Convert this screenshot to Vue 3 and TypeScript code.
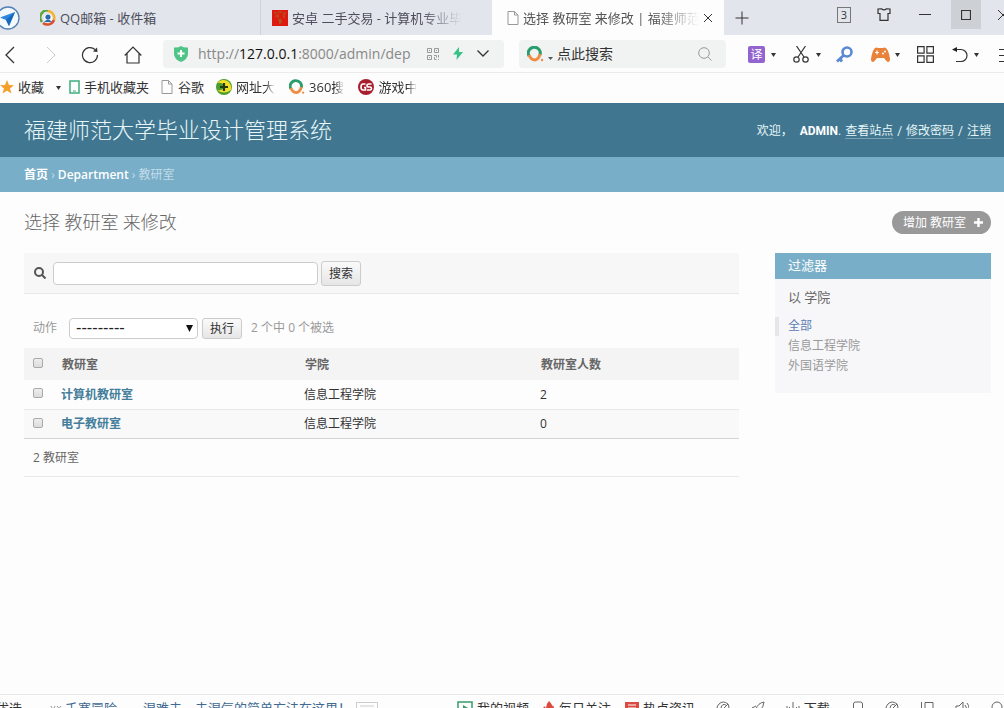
<script setup lang="ts">
import { ref, computed } from 'vue'

interface Department {
  id: number
  name: string
  college: string
  members: number
}

const departments: Department[] = [
  { id: 1, name: '计算机教研室', college: '信息工程学院', members: 2 },
  { id: 2, name: '电子教研室', college: '信息工程学院', members: 0 },
]
const filters: string[] = ['全部', '信息工程学院', '外国语学院']
const activeFilter = ref('全部')
const query = ref('')
const siteQuery = ref('')
const action = ref('')
const selected = ref<number[]>([])
const allSelected = computed<boolean>({
  get: () => selected.value.length === departments.length,
  set: (on) => {
    selected.value = on ? departments.map((d) => d.id) : []
  },
})
</script>

<template>
  <div class="browser">
    <div class="tabstrip">
      <button class="brand" aria-label="浏览器">
        <svg width="20" height="26" viewBox="0 0 20 26"><circle cx="8" cy="13" r="11" fill="#f4f9fd" stroke="#5580b4" stroke-width="1.3" /><path d="M15 7 0 12.5l6 2.500 3 6z" fill="#2b86dc" /><path d="M15 7 6 15l3 6z" fill="#1669bd" /></svg>
      </button>
      <div class="tab first">
        <svg width="16" height="16" viewBox="0 0 16 16"><path d="M2 12A7 7 0 0 1 10 1" fill="none" stroke="#5da63a" stroke-width="2.500" /><path d="M8 1a7 7 0 0 1 6 9" fill="none" stroke="#f3b32a" stroke-width="2.500" /><path d="M14 10a7 7 0 0 1-11 3" fill="none" stroke="#d9502d" stroke-width="2.500" /><circle cx="8" cy="8" r="4" fill="#fff" /><circle cx="8" cy="7" r="2.600" fill="#2a6bb0" /><path d="M4 12q4-5 8 0z" fill="#2a6bb0" /></svg>
        <button class="tab-name">QQ邮箱 - 收件箱</button>
      </div>
      <div class="tab second">
        <svg width="16" height="16" viewBox="0 0 16 16"><path fill="#df1a10" d="M0 0h16v16H0z" /><path d="M2 3h3M6 2h4M11 3h3M3 6h2m1-2v4M12 4v4M6 10h4M7 12h3M8 9v5" stroke="#9d6a1c" stroke-width="1.200" /></svg>
        <button class="tab-name fade">安卓 二手交易 - 计算机专业毕</button>
      </div>
      <div class="tab active">
        <svg width="12" height="14" viewBox="0 0 12 14" class="line grey"><path d="M1 .5h6.500L11 4v9.500H1zM7.500.5V4H11" /></svg>
        <button class="tab-name fade">选择 教研室 来修改 | 福建师范</button>
        <button class="icon-btn" aria-label="关闭标签页"><svg width="10" height="10" viewBox="0 0 10 10" class="line"><path d="m1 1 8 8M9 1 1 9" /></svg></button>
      </div>
      <button class="icon-btn new-tab" aria-label="新标签页"><svg width="14" height="14" viewBox="0 0 14 14" class="line"><path d="M7 .5v13M.5 7h13" /></svg></button>
      <div class="window-tools">
        <button class="badge">3</button>
        <button class="icon-btn" aria-label="皮肤"><svg width="14" height="13" viewBox="0 0 14 13" class="line"><path d="M4.500.8 1 1v4.500h2v6.800h8V5.500h2V1L9.500.8Q7 3 4.500.8z" stroke-width="1.200" /></svg></button>
        <button class="icon-btn" aria-label="最小化"><svg width="12" height="12" viewBox="0 0 12 12" class="line"><path d="M0 5.500h12" /></svg></button>
        <button class="icon-btn max" aria-label="最大化"><svg width="10" height="10" viewBox="0 0 10 10" class="line"><path d="M.5.5h9v9h-9z" stroke-width="1.200" /></svg></button>
        <button class="icon-btn edge" aria-label="关闭"><svg width="10" height="10" viewBox="0 0 10 10" class="line"><path d="m0 0 10 10M10 0 0 10" /></svg></button>
      </div>
    </div>

    <div class="toolbar">
      <div class="nav">
        <button class="icon-btn" aria-label="后退"><svg width="10" height="18" viewBox="0 0 10 18" class="line"><path d="M9 1 1 9l8 8" stroke-width="1.300" /></svg></button>
        <button class="icon-btn forward" aria-label="前进"><svg width="10" height="18" viewBox="0 0 10 18" class="line pale"><path d="m1 1 8 8-8 8" /></svg></button>
        <button class="icon-btn" aria-label="刷新"><svg width="18" height="18" viewBox="0 0 18 18" class="line"><path d="M16.500 9A7.500 7.500 0 1 1 14 3.500" stroke-width="1.200" /><path d="M12 5.500 16.500 6l-.5-4.500z" fill="#333" stroke="none" /></svg></button>
        <button class="icon-btn" aria-label="主页"><svg width="18" height="18" viewBox="0 0 18 18" class="line"><path d="M.7 9.500 9 1l8.300 8.500M3 7.500V17h12V7.500" stroke-width="1.200" /></svg></button>
      </div>
      <div class="address">
        <svg width="14" height="16" viewBox="0 0 14 16"><path d="M0 1.500Q4 2 7 0q3 2 7 1.500V8q0 5-7 8-7-3-7-8z" fill="#4fc487" /><path d="M7 4v7M3.500 7.500h7" stroke="#fff" stroke-width="2" /></svg>
        <a class="url" href="#">http://<b>127.0.0.1</b>:8000/admin/dep</a>
        <svg width="12" height="12" viewBox="0 0 12 12" class="line grey"><path d="M.5.5h4v4h-4zM7.500.5h4v4h-4zM.5 7.500h4v4h-4zM7 7.500h2.500v2M11.500 7v2.500M7.500 9v2.500h2M11.500 11v1M2 2.500h1M9 2.500h1M2 9.500h1" /></svg>
        <svg width="10" height="13" viewBox="0 0 10 13"><path d="M6 0 0 7.500h4L3.500 13 10 5H6z" fill="#35c284" /></svg>
        <button class="icon-btn" aria-label="展开"><svg width="12" height="7" viewBox="0 0 12 7" class="line"><path d="m.5.5 5.500 5.500L11.500.5" stroke-width="1.300" /></svg></button>
      </div>
      <div class="engine">
        <svg width="17" height="16" viewBox="0 0 17 16"><path d="M2 10A6 6 0 1 1 13 9" fill="none" stroke="#2b9d6c" stroke-width="3" /><path d="M2 9q2 5 6 5 4-1 5-6" fill="none" stroke="#ef8d45" stroke-width="3" /><circle cx="15" cy="14" r="1.200" fill="#ef8d45" /></svg>
        <svg width="5" height="3" viewBox="0 0 5 3" class="low"><path d="M0 0h5L2.500 3z" fill="#555" /></svg>
        <input v-model="siteQuery" aria-label="点此搜索" placeholder="点此搜索" />
        <svg width="14" height="14" viewBox="0 0 14 14" class="line grey"><circle cx="6" cy="6" r="5.300" /><path d="m10 10 3.500 3.500" /></svg>
      </div>
      <div class="extras">
        <button class="icon-btn translate">译</button>
        <svg class="caret c1" width="5" height="4" viewBox="0 0 5 4"><path d="M0 0h5L2.500 4z" /></svg>
        <button class="icon-btn" aria-label="截图"><svg width="16" height="17" viewBox="0 0 16 17" class="line"><path d="M3.500 0 11 11M12.500 0 5 11" stroke-width="1.200" /><circle cx="3.500" cy="13.500" r="2.700" stroke-width="1.200" /><circle cx="12.500" cy="13.500" r="2.700" stroke-width="1.200" /></svg></button>
        <svg class="caret c2" width="5" height="4" viewBox="0 0 5 4"><path d="M0 0h5L2.500 4z" /></svg>
        <button class="icon-btn key" aria-label="登录管家"><svg width="17" height="17" viewBox="0 0 17 17" fill="none" stroke="#5a88d2"><circle cx="11" cy="6" r="4.500" stroke-width="2.600" /><path d="m8 9-7 6.500M3.500 12.500 6 15.500" stroke-width="2.800" /></svg></button>
        <button class="icon-btn" aria-label="游戏"><svg width="19" height="15" viewBox="0 0 19 15"><path d="M4 1q2-1 3 0h5q1-1 3 0 3 3 4 11 0 3-2 3-1 0-4-4H6q-3 4-4 4-2 0-2-3Q1 4 4 1z" fill="#ea8138" /><path d="M6 3.500v4M4 5.500h4" stroke="#fff" stroke-width="1.200" /><circle cx="12" cy="6.500" r="1" fill="#fff" /><circle cx="14" cy="4.500" r="1" fill="#fff" /></svg></button>
        <svg class="caret c2" width="5" height="4" viewBox="0 0 5 4"><path d="M0 0h5L2.500 4z" /></svg>
        <button class="icon-btn apps" aria-label="扩展"><svg width="17" height="17" viewBox="0 0 17 17" class="line"><path d="M.6.6h6.500v6.500H.6zM9.900.6h6.500v6.500H9.900zM.6 9.900h6.500v6.500H.6zM9.900 9.900h6.500v6.500H9.900z" stroke-width="1.200" /></svg></button>
        <button class="icon-btn undo" aria-label="恢复"><svg width="16" height="17" viewBox="0 0 16 17" class="line"><path d="M2 3.500h7a6 6 0 0 1 0 12H4" stroke-width="1.200" /><path d="M5 1v5L0 3.500z" fill="#222" stroke="none" /></svg></button>
        <svg class="caret c3" width="5" height="4" viewBox="0 0 5 4"><path d="M0 0h5L2.500 4z" /></svg>
        <button class="icon-btn menu" aria-label="菜单"><svg width="14" height="14" viewBox="0 0 14 14" class="line"><path d="M0 1.500h14M0 7.500h14M0 13.500h14" /></svg></button>
      </div>
    </div>

    <nav class="bookmarks">
      <a href="#" class="fav"><svg width="14" height="14" viewBox="0 0 14 14"><path d="m7 0 2 5 5 .3-4 3.200 1.500 5L7 10.700 2.500 13.500l1.500-5L0 5.300 5 5z" fill="#f5a02c" /></svg>收藏</a>
      <svg class="caret" width="5" height="4" viewBox="0 0 5 4"><path d="M0 0h5L2.500 4z" /></svg>
      <a href="#" class="phone"><svg width="11" height="14" viewBox="0 0 11 14"><path d="M1 1h9v12H1z" fill="#fff" stroke="#3eae7c" stroke-width="1.500" /><path d="M4 11h3" stroke="#3eae7c" /></svg>手机收藏夹</a>
      <a href="#" class="google"><svg width="12" height="14" viewBox="0 0 12 14" class="line grey"><path d="M1 .5h6.500L11 4v9.500H1zM7.500.5V4H11" /></svg>谷歌</a>
      <a href="#" class="sites"><svg width="16" height="16" viewBox="0 0 16 16"><circle cx="8" cy="8" r="8" fill="#4c9c2e" /><path d="M1 4a8 8 0 0 1 14 7Q8 16 1 11q9 1 6-6-3-2-6-1z" fill="#f3df25" /><path d="M8 4v8M4 8h8" stroke="#243c10" stroke-width="2.200" /></svg><span class="fade">网址大</span></a>
      <a href="#" class="so"><svg width="16" height="16" viewBox="0 0 17 16"><path d="M2 10A6 6 0 1 1 13 9" fill="none" stroke="#2b9d6c" stroke-width="3" /><path d="M2 9q2 5 6 5 4-1 5-6" fill="none" stroke="#ef8d45" stroke-width="3" /><circle cx="15" cy="14" r="1.200" fill="#ef8d45" /></svg><span class="fade">360搜</span></a>
      <a href="#" class="games"><svg width="16" height="16" viewBox="0 0 16 16"><circle cx="8" cy="8" r="8" fill="#a81e2e" /><path d="M7.500 5H5Q3 5 3 8t2 3h2.500V8.500H6M13.500 5H11q-2 0-2 1.500T11 8h1q1.500 0 1.500 1.500T12 11H9" fill="none" stroke="#fff" stroke-width="1.600" /></svg><span class="fade">游戏中</span></a>
    </nav>

    <div class="page">
      <header class="site-header">
        <h1>福建师范大学毕业设计管理系统</h1>
        <div class="user">欢迎， <strong>ADMIN</strong>. <a href="#">查看站点</a> / <a href="#">修改密码</a> / <a href="#">注销</a></div>
      </header>
      <nav class="crumbs"><a href="#">首页</a> › <a href="#">Department</a> › 教研室</nav>

      <main class="content">
        <div class="heading">
          <h2>选择 教研室 来修改</h2>
          <a class="add" href="#">增加 教研室
            <svg width="9" height="9" viewBox="0 0 9 9"><path d="M4.500 0v9M0 4.500h9" stroke="#fff" stroke-width="2.400" /></svg>
          </a>
        </div>
        <div class="columns">
          <section class="list">
            <form class="search" @submit.prevent>
              <label for="searchbar" aria-label="搜索"><svg width="12" height="12" viewBox="0 0 12 12" fill="none" stroke="#555" stroke-width="2"><circle cx="5" cy="5" r="4" /><path d="m8 8 3.500 3.500" /></svg></label>
              <input id="searchbar" v-model="query" type="text" />
              <button class="btn tall">搜索</button>
            </form>
            <div class="actions">
              <label for="action">动作</label>
              <div class="select">
                <select id="action" v-model="action"><option value="">---------</option></select>
                <svg width="7" height="7" viewBox="0 0 7 7"><path d="M0 0h7L3.500 7z" fill="#111" /></svg>
              </div>
              <button class="btn">执行</button>
              <span class="counter">2 个中 {{ selected.length }} 个被选</span>
            </div>
            <table>
              <thead>
                <tr>
                  <th class="check"><input v-model="allSelected" type="checkbox" aria-label="全选" /></th>
                  <th class="name">教研室</th>
                  <th class="college">学院</th>
                  <th>教研室人数</th>
                </tr>
              </thead>
              <tbody>
                <tr v-for="d in departments" :key="d.id">
                  <td class="check"><input v-model="selected" type="checkbox" :value="d.id" :aria-label="d.name" /></td>
                  <td><a href="#">{{ d.name }}</a></td>
                  <td>{{ d.college }}</td>
                  <td>{{ d.members }}</td>
                </tr>
              </tbody>
            </table>
            <p class="total">2 教研室</p>
          </section>
          <aside class="filter">
            <h2>过滤器</h2>
            <h3>以 学院</h3>
            <ul>
              <li v-for="f in filters" :key="f" :class="{ on: f === activeFilter }">
                <a href="#" @click.prevent="activeFilter = f">{{ f }}</a>
              </li>
            </ul>
          </aside>
        </div>
      </main>
    </div>

    <footer class="status">
      <span class="pick">优选</span>
      <svg class="ticks" width="12" height="12" viewBox="0 0 12 12"><path d="m1 5 2 4 2-4M7 5l4 5M11 5l-4 5" fill="none" stroke="#999" /></svg>
      <a href="#" class="news">千寒冒险</a>
      <a href="#" class="news long">湿难去，去湿气的简单方法在这里！</a>
      <svg width="22" height="12" viewBox="0 0 22 12" class="line pale"><path d="M.5 12V1.500h21V12M4 5h14M4 9h14" /></svg>
      <div class="feeds">
        <a href="#"><svg width="16" height="14" viewBox="0 0 16 14"><path d="M1 1h14v12H1z" fill="none" stroke="#3a9b6c" stroke-width="1.500" /><path d="m6 4 5 3-5 3z" fill="#3a9b6c" /></svg>我的视频</a>
        <a href="#"><svg width="12" height="14" viewBox="0 0 12 14"><path d="M6 0q4 4 3 6l1-2q4 9-4 10Q-2 13 1 5l2 2q0-4 3-7z" fill="#dd4b3e" /></svg>每日关注</a>
        <a href="#"><svg width="14" height="14" viewBox="0 0 14 14"><path d="M0 1h14v12H0z" fill="#dc4a44" /><path d="M3 4h8M3 7h8" stroke="#fff" /></svg>热点资讯</a>
      </div>
      <div class="tools">
        <svg width="14" height="14" viewBox="0 0 14 14" class="line"><path d="M12 3Q7-1 3 3t0 9M10 4q-4-2-5 3M6 9l6-6M12 3q2 3 0 6" /></svg>
        <svg width="14" height="14" viewBox="0 0 14 14" class="line"><path d="M13 1Q7 2 5 8l3 2Q13 6 13 1zM5 5 1 7l4 1M9 10l-2 4" /></svg>
        <a href="#"><svg width="14" height="14" viewBox="0 0 14 14" class="line"><path d="M7 1v9M3 6l4 4 4-4M1 5v8h12V5" /></svg>下载</a>
        <svg width="14" height="14" viewBox="0 0 14 14" class="line"><path d="M2.500 14V3q0-2 2-2h5q2 0 2 2v11" /></svg>
        <svg width="14" height="14" viewBox="0 0 14 14" class="line"><path d="M12 3Q7-1 3 3t0 9M10 4q-4-2-5 3M6 9l6-6M12 3q2 3 0 6" /></svg>
        <svg width="14" height="14" viewBox="0 0 14 14" class="line"><path d="M1.500 1v13M5 1.500h8V11H5z" /></svg>
        <svg width="14" height="14" viewBox="0 0 14 14" class="line"><path d="M1 5h3l4-4v12L4 9H1zM10 4q3 3 0 6M12 2q4 5 0 10" /></svg>
        <svg width="14" height="14" viewBox="0 0 14 14" class="line"><circle cx="7" cy="6" r="5" /></svg>
      </div>
    </footer>
  </div>
</template>

<style>
body { margin: 0; }
</style>

<style scoped>
* { box-sizing: border-box; }
.browser { display: flex; flex-direction: column; height: 100vh; overflow: hidden; background: #fdfdfd; color: #333; font: 13px/20px "Open Sans", "Noto Sans CJK SC", sans-serif; }
button, input, select { font: inherit; color: inherit; }
button { padding: 0; border: 0; background: none; }
a { color: inherit; text-decoration: none; }
svg { flex: none; display: block; }
h1, h2, h3, p, ul { margin: 0; padding: 0; }
h1, h2 { font-weight: 300; }
ul { list-style: none; }
.line { fill: none; stroke: #333; }
.line.grey { stroke: #999; }
.line.pale { stroke: #ccc; }
.caret { fill: #333; }
.icon-btn { flex: none; display: flex; align-items: center; justify-content: center; }
.fade { mask-image: linear-gradient(to right, #000 75%, transparent); }

.tabstrip { flex: none; display: flex; height: 35px; background: #e2e5eb; }
.brand { width: 28px; flex: none; }
.tab { flex: 0 1 232px; min-width: 0; display: flex; align-items: center; gap: 4px; color: #4d4d5c; }
.tab.first { padding-left: 12px; }
.tab.second { padding: 0 26px 0 11px; border-left: 1px solid #cfd2d8; }
.tab.active { justify-content: space-between; padding: 0 11px 0 15px; background: #fdfdfd; color: #555; }
.tab-name { flex: 0 1 auto; min-width: 0; overflow: hidden; white-space: nowrap; text-align: left; }
.new-tab { width: 36px; }
.window-tools { margin-left: auto; display: flex; align-items: center; height: 29px; overflow: hidden; }
.badge { width: 14px; height: 16px; margin-right: 26px; border: 1px solid #777; font-size: 11px; line-height: 14px; }
.window-tools .icon-btn + .icon-btn { margin-left: 28px; }
.window-tools .icon-btn.max { width: 30px; height: 29px; margin-left: 20px; background: #cdd1d6; }
.window-tools .icon-btn.edge { margin: 0 -4px 0 17px; }

.toolbar { flex: none; display: flex; align-items: center; height: 38px; overflow: hidden; border-bottom: 1px solid #ebebeb; }
.nav { flex: none; display: flex; gap: 25px; padding-top: 2px; margin: 0 21px 0 5px; }
.forward { margin-left: 6px; }
.address, .engine { display: flex; align-items: center; min-width: 0; height: 28px; border-radius: 4px; background: #f1f2f2; }
.address { flex: 1 1 341px; padding: 0 15px 0 11px; gap: 14px; }
.url { flex: 1; min-width: 0; margin: 0 -10px 0 -4px; overflow: hidden; white-space: nowrap; font-size: 14px; color: #888; }
.url b { font-weight: 400; color: #111; }
.engine { flex: 1 1 207px; margin-left: 15px; padding: 0 14px 0 8px; gap: 4px; }
.engine input { flex: 1; min-width: 0; width: 0; padding: 0; border: 0; background: none; font-size: 14px; outline: 0; }
.engine input::placeholder { color: #333; opacity: 1; }
.low { margin-top: 10px; }
.extras { flex: none; display: flex; align-items: center; width: 278px; padding: 2px 0 0 22px; overflow: hidden; }
.translate { width: 17px; height: 17px; border-radius: 2px; background: #9363cf; color: #fff; font-size: 12px; line-height: 16px; }
.c1 { margin: 0 17px 0 6px; }
.c2 { margin: 0 0 0 7px; }
.c3 { margin: 0 20px 0 6px; }
.key { margin: 0 18px 0 15px; }
.extras .key ~ .c2 { margin-left: 5px; }
.apps { margin: 0 18px 0 17px; }

.bookmarks { flex: none; display: flex; align-items: center; height: 30px; padding-bottom: 2px; overflow: hidden; white-space: nowrap; }
.bookmarks a { display: flex; align-items: center; gap: 4px; }
.bookmarks .caret { margin: 2px 8px 0 12px; }
.google, .sites { margin-left: 12px; }
.bookmarks .google { gap: 5px; }
.so, .games { margin-left: 14px; }

.page { flex: 1; min-height: 0; overflow: hidden; font-size: 12px; font-family: Roboto, "Noto Sans CJK SC", sans-serif; }
.site-header { display: flex; align-items: center; justify-content: space-between; height: 54px; padding: 2px 13px 0 24px; background: #417690; color: #e6f6f8; }
h1 { font-size: 22px; line-height: 32px; }
.user strong { margin-left: 4px; color: #fff; }
.user a { margin: 0 1px; border-bottom: 1px solid #7ba0b2; }
.user a:last-child { margin-right: 0; }
.crumbs { height: 35px; padding: 0 24px; background: #79aec8; color: #c4dce8; line-height: 35px; font-family: "Open Sans", "Noto Sans CJK SC", sans-serif; }
.crumbs a { color: #fff; font-weight: 600; }
.content { padding: 18px 13px 0 24px; }
.heading { display: flex; align-items: center; justify-content: space-between; height: 25px; margin-bottom: 18px; }
.heading h2 { font-size: 18px; line-height: 25px; color: #666; }
.add { display: flex; align-items: center; gap: 8px; height: 23px; padding: 0 8px 0 11px; border-radius: 12px; background: #999; color: #fff; }
.columns { display: flex; align-items: flex-start; gap: 36px; }
.list { flex: 1; min-width: 0; font-family: "Open Sans", "Noto Sans CJK SC", sans-serif; }
.search { display: flex; align-items: center; height: 41px; padding-left: 10px; border-bottom: 1px solid #e8e8e8; background: #f7f7f7; }
.search input { flex: 0 1 265px; min-width: 0; height: 23px; margin: 0 3px 0 7px; padding: 0 5px; border: 1px solid #ccc; border-radius: 4px; background: #fff; }
.btn { height: 21px; padding: 0 7px; border: 1px solid #ccc; border-radius: 3px; background: linear-gradient(#fafafa, #e6e6e6); color: #333; line-height: 19px; }
.btn.tall { height: 25px; line-height: 23px; }
.actions { display: flex; align-items: center; height: 54px; padding: 14px 9px 0; color: #999; }
.select { flex: 0 1 129px; display: grid; align-items: center; margin: 0 4px 0 12px; }
.select > * { grid-area: 1 / 1; }
.select svg { justify-self: end; margin-right: 5px; pointer-events: none; }
select { appearance: none; width: 100%; height: 21px; padding: 0 6px; border: 1px solid #ccc; border-radius: 4px; background: #fff; color: #222; font: 15px/19px "DejaVu Sans", "Noto Sans CJK SC", sans-serif; }
.counter { margin-left: 9px; }
table { width: 100%; table-layout: fixed; border-collapse: collapse; line-height: 18px; }
th, td { height: 29px; padding: 1px 8px 0; text-align: left; }
th { height: 32px; padding-left: 9px; background: #f4f4f4; color: #666; font-weight: 600; }
th.name { width: 34%; }
th.college { width: 33%; }
td { border-bottom: 1px solid #e8e8e8; }
td a { color: #447e9b; font-weight: 700; }
tbody tr:nth-child(even) { background: #f9f9f9; }
tbody tr:last-child td { border-bottom-color: #d5d5d5; }
.check { width: 29px; padding: 0 0 2px 9px; }
.check input { appearance: none; display: block; width: 10px; height: 10px; margin: 0; border: 1px solid #aaa; border-radius: 2px; background: linear-gradient(#eee, #dcdcdc); }
.check input:checked { background: #79aec8; }
.total { padding: 9px; border-bottom: 1px solid #e8e8e8; line-height: 19px; color: #666; }
.filter { flex: 0 0 216px; padding-bottom: 16px; background: #f7f7f9; }
.filter h2 { padding-left: 13px; background: #79aec8; color: #fff; font-size: 13px; line-height: 26px; font-weight: 400; }
.filter h3 { padding: 9px 13px; font-size: 13px; line-height: 20px; font-weight: 400; color: #666; }
.filter ul { color: #999; }
.filter li { margin-bottom: 1px; padding-left: 9px; border-left: 4px solid transparent; line-height: 19px; }
.filter li.on { border-left-color: #e6e6e8; color: #5b80b2; }

.status { flex: none; display: flex; align-items: flex-start; height: 14px; padding-top: 4px; overflow: hidden; border-top: 1px solid #e8e8e8; white-space: nowrap; line-height: 18px; }
.status svg { margin-top: 2px; }
.pick { width: 22px; direction: rtl; }
.ticks { margin: 0 3px 0 28px; }
.news { color: #3f6a94; }
.news.long { margin: 0 5px 0 26px; }
.feeds { display: flex; margin-left: auto; gap: 14px; }
.feeds a, .tools a { display: flex; gap: 4px; }
.tools { display: flex; justify-content: space-between; width: 288px; margin-left: 21px; }
.tools .line { stroke: #666; }
</style>
